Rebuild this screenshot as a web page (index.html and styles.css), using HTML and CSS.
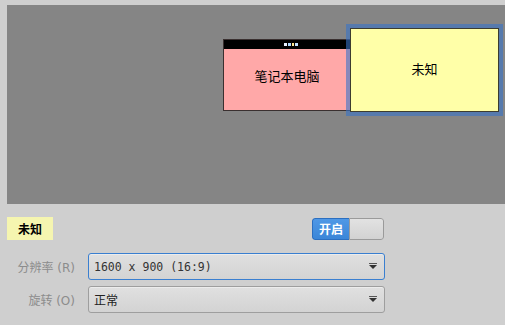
FILE: index.html
```html
<!DOCTYPE html>
<html>
<head>
<meta charset="utf-8">
<link rel="stylesheet" href="styles.css">
</head>
<body>
<div class="page">
  <div class="canvas">
    <div class="mon laptop">
      <div class="bar"><span class="dots"><i class="d1"></i><i class="d2"></i><i class="d3"></i><i class="d4"></i></span></div>
      <div class="mon-body">笔记本电脑</div>
    </div>
    <div class="mon unknown">
      <div class="mon-body">未知</div>
    </div>
  </div>
  <div class="controls">
    <div class="row-top">
      <div class="name">未知</div>
      <div class="toggle"><span class="on">开启</span><span class="off"></span></div>
    </div>
    <div class="row">
      <div class="label">分辨率 (R)</div>
      <div class="combo focused"><span class="val mono">1600 x 900 (16:9)</span><span class="arrow"></span></div>
    </div>
    <div class="row">
      <div class="label">旋转 (O)</div>
      <div class="combo"><span class="val">正常</span><span class="arrow"></span></div>
    </div>
  </div>
</div>
</body>
</html>
```
FILE: styles.css
```css
html, body {
  margin: 0;
  padding: 0;
  background: #cfcfcf;
  width: 505px;
  height: 325px;
  overflow: hidden;
  font-family: "Noto Sans CJK SC", "DejaVu Sans", sans-serif;
}
.page {
  padding: 5px 0 0 7px;
}
.canvas {
  position: relative;
  height: 199px;
  background: #858585;
}
.mon {
  position: absolute;
  box-sizing: border-box;
}
.laptop {
  left: 216px;
  top: 34px;
  width: 128px;
  height: 72px;
  border: 1px solid #3a3030;
  display: flex;
  flex-direction: column;
  background: #ffa8a8;
}
.bar {
  height: 9px;
  background: #000;
  display: flex;
  justify-content: center;
  align-items: center;
}
.dots {
  display: flex;
  gap: 1px;
  align-items: center;
  margin-left: 8px;
}
.dots i {
  display: block;
  width: 3px;
  height: 3px;
}
.dots .d1 { background: #e8f0ff; }
.dots .d2 { background: #b0d8ff; }
.dots .d3 { background: #ffe890; width: 2px; }
.dots .d4 { background: #c0e0ff; }
.laptop .mon-body {
  flex: 1;
  display: flex;
  align-items: center;
  justify-content: center;
  font-size: 13px;
  color: #000;
  padding-bottom: 9px;
}
.unknown {
  left: 339px;
  top: 19px;
  width: 157px;
  height: 92px;
  border: 4px solid rgba(55, 115, 200, 0.6);
}
.unknown .mon-body {
  box-sizing: border-box;
  height: 100%;
  background: #ffffa8;
  border: 1px solid #3c3c30;
  display: flex;
  align-items: center;
  justify-content: center;
  font-size: 13px;
  color: #000;
  padding-bottom: 4px;
}
.controls {
  padding-top: 13px;
  display: flex;
  flex-direction: column;
}
.row-top {
  display: flex;
  align-items: center;
  justify-content: space-between;
  width: 377px;
  height: 23px;
  margin-bottom: 13px;
}
.name {
  background: #f5f5b0;
  width: 46px;
  height: 23px;
  display: flex;
  align-items: center;
  justify-content: center;
  font-weight: bold;
  font-size: 12px;
  color: #000;
}
.toggle {
  display: flex;
  height: 22px;
  width: 72px;
  box-sizing: border-box;
  border-radius: 3px;
  overflow: hidden;
}
.toggle .on {
  width: 37px;
  background: linear-gradient(#4f98e6, #3b86d8);
  border: 1px solid #2c6fc0;
  border-right: none;
  border-radius: 3px 0 0 3px;
  color: #fff;
  font-weight: bold;
  font-size: 12px;
  display: flex;
  align-items: center;
  justify-content: center;
  box-sizing: border-box;
}
.toggle .off {
  flex: 1;
  background: linear-gradient(#e2e2e2, #d2d2d2);
  border: 1px solid #9a9a9a;
  border-radius: 0 3px 3px 0;
  box-sizing: border-box;
}
.row {
  display: flex;
  align-items: center;
  margin-bottom: 6px;
}
.label {
  width: 68px;
  text-align: right;
  padding-right: 13px;
  font-size: 12px;
  color: #8c8c8c;
  font-family: "DejaVu Sans", "Noto Sans CJK SC", sans-serif;
  white-space: nowrap;
}
.combo {
  box-sizing: border-box;
  width: 297px;
  height: 27px;
  border: 1px solid #9e9e9e;
  border-radius: 3px;
  background: linear-gradient(#e0e0e0, #d3d3d3);
  display: flex;
  align-items: center;
  justify-content: space-between;
  padding: 0 7px 0 5px;
  box-shadow: inset 0 1px 0 #ececec;
}
.combo.focused {
  border: 1px solid #3a7fd0;
}
.val {
  font-size: 12px;
  color: #222;
}
.val.mono {
  font-family: "DejaVu Sans Mono", monospace;
  font-size: 11.5px;
  color: #333;
}
.arrow {
  width: 0;
  height: 0;
  border-left: 4px solid transparent;
  border-right: 4px solid transparent;
  border-top: 4px solid #333;
  position: relative;
}
.arrow::before {
  content: "";
  position: absolute;
  left: -4px;
  top: -6px;
  width: 8px;
  height: 1px;
  background: #555;
}
```
